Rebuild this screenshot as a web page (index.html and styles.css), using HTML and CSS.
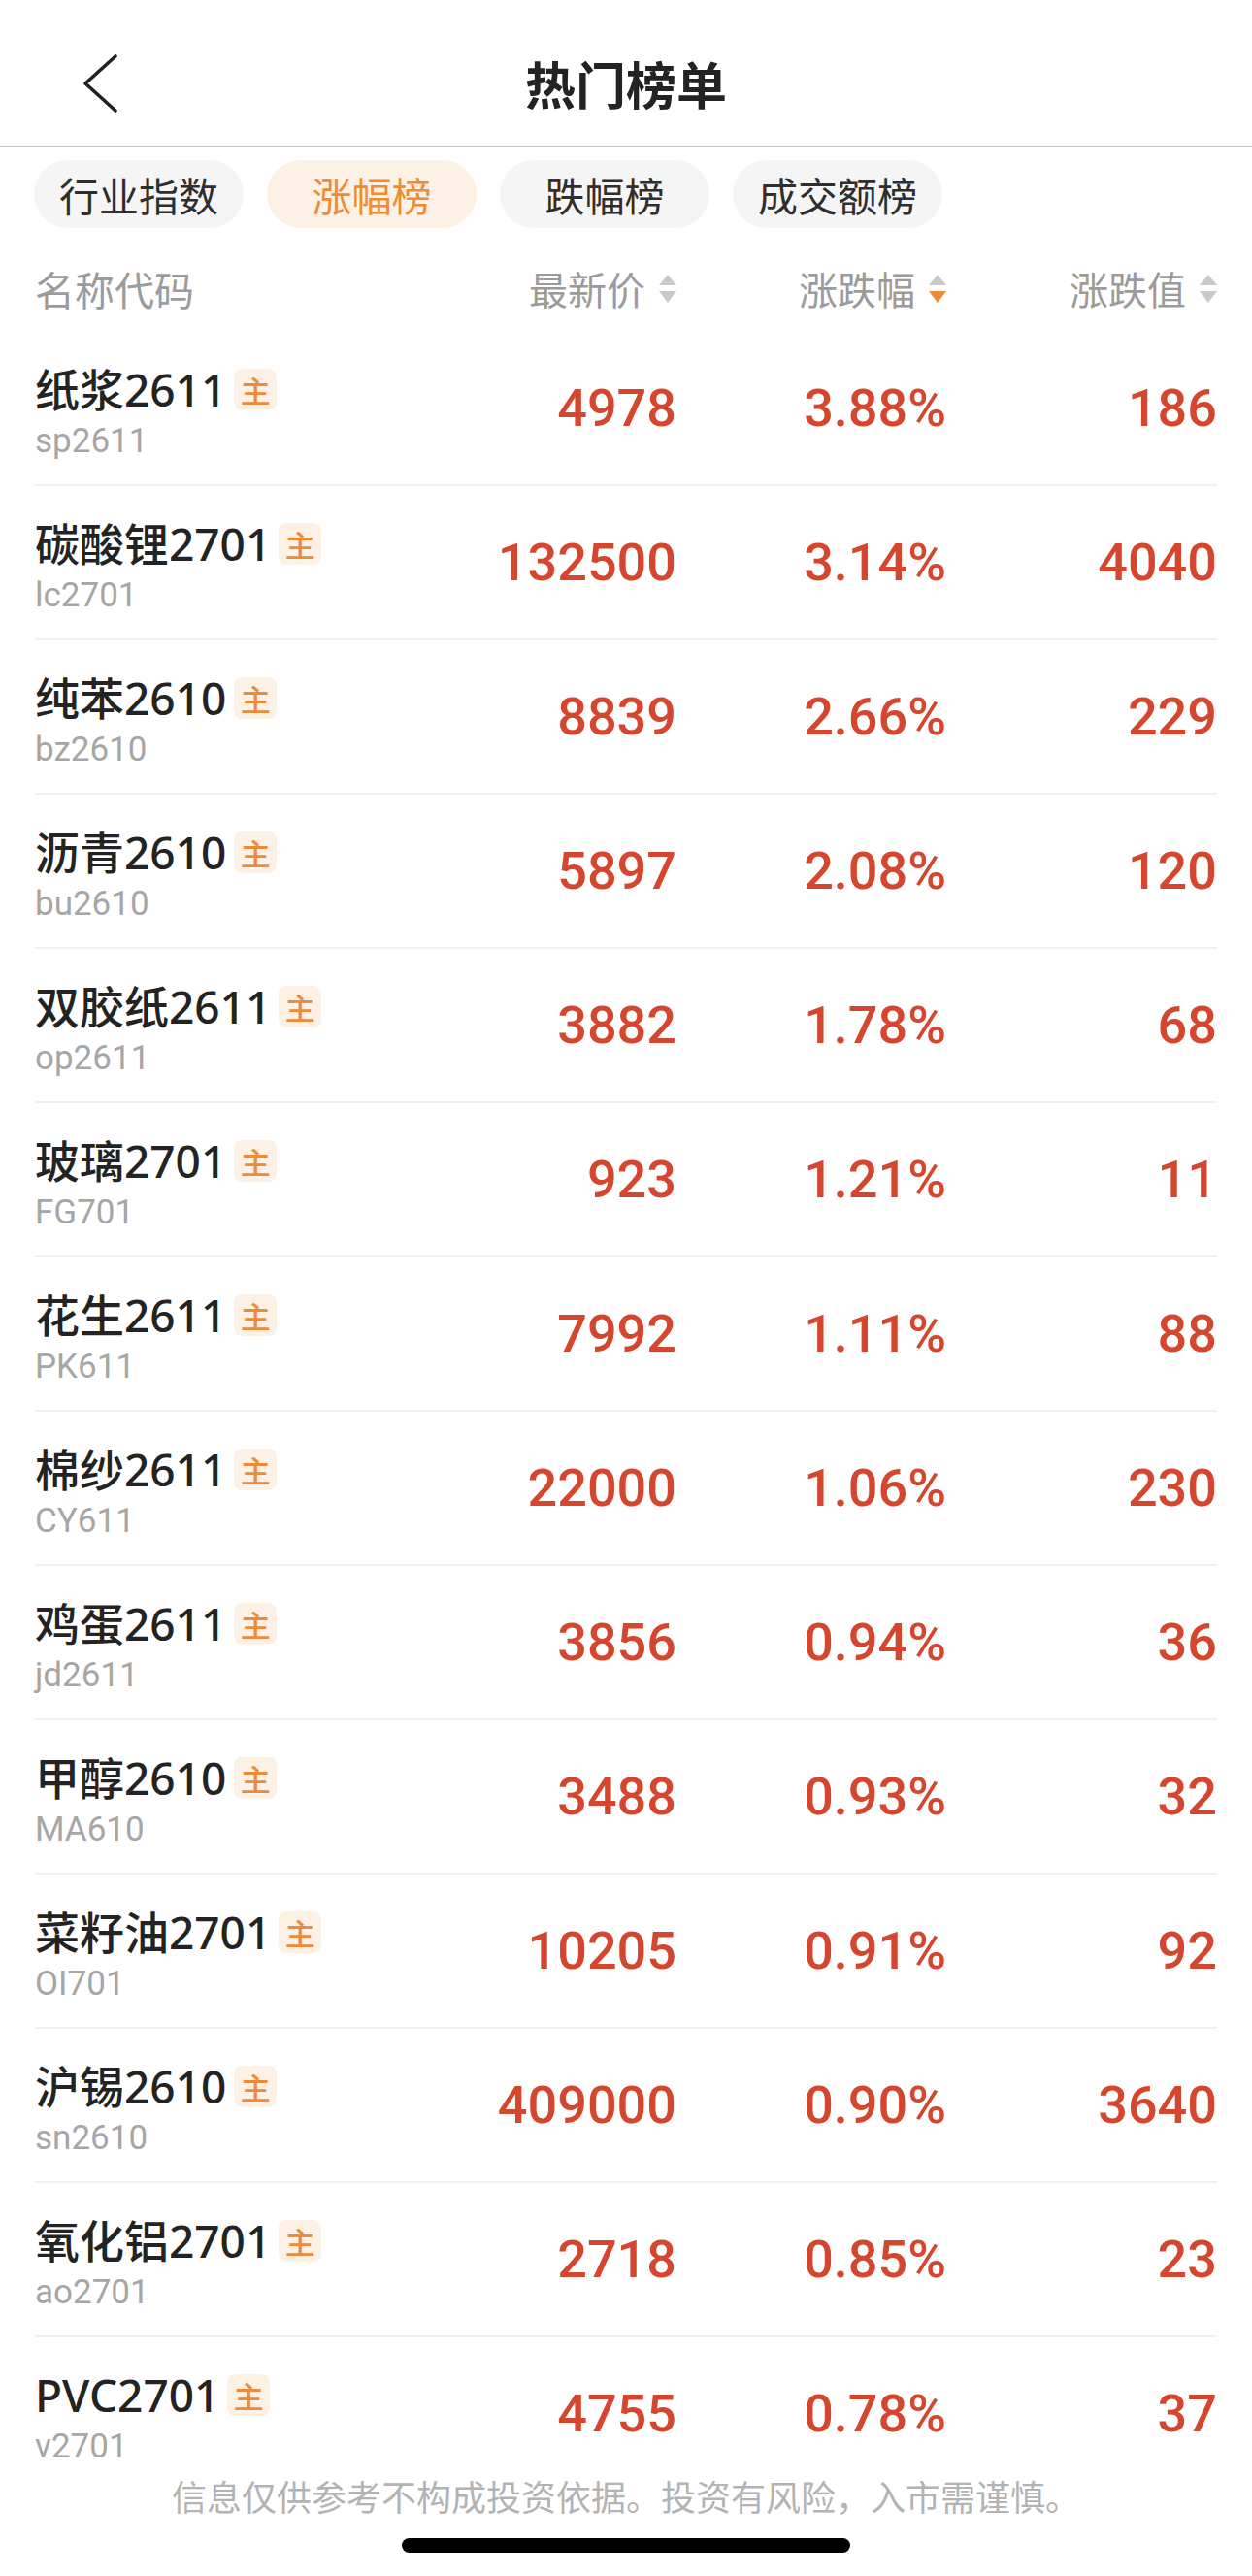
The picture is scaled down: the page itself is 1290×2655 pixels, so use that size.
FILE: index.html
```html
<!DOCTYPE html>
<html lang="zh-CN">
<head>
<meta charset="utf-8">
<title>热门榜单</title>
<link rel="stylesheet" href="styles.css">
</head>
<body>
<div class="page">
  <header class="topbar">
    <div class="back">
      <svg class="back-icon" width="36" height="60" viewBox="0 0 36 60"><polyline points="33,2 2,30 33,58" fill="none" stroke="#222" stroke-width="3.6" stroke-linecap="round" stroke-linejoin="round"/></svg>
    </div>
    <h1 class="title">热门榜单</h1>
    <div class="spacer"></div>
  </header>

  <nav class="tabs">
    <span class="tab">行业指数</span>
    <span class="tab active">涨幅榜</span>
    <span class="tab">跌幅榜</span>
    <span class="tab">成交额榜</span>
  </nav>

  <div class="grid colhead">
    <div class="hcell left">名称代码</div>
    <div class="hcell">最新价<svg class="sort" width="18" height="29" viewBox="0 0 18 29"><polygon points="9,0 18,11 0,11" fill="#c9c9c9"/><polygon points="0,17 18,17 9,29" fill="#c9c9c9"/></svg></div>
    <div class="hcell">涨跌幅<svg class="sort" width="18" height="29" viewBox="0 0 18 29"><polygon points="9,0 18,11 0,11" fill="#c9c9c9"/><polygon points="0,17 18,17 9,29" fill="#ec8a35"/></svg></div>
    <div class="hcell">涨跌值<svg class="sort" width="18" height="29" viewBox="0 0 18 29"><polygon points="9,0 18,11 0,11" fill="#c9c9c9"/><polygon points="0,17 18,17 9,29" fill="#c9c9c9"/></svg></div>
  </div>

  <main class="list">
    <div class="grid row"><div class="name-cell"><div class="name">纸浆2611<span class="badge">主</span></div><div class="code">sp2611</div></div><div class="val">4978</div><div class="val">3.88%</div><div class="val">186</div></div>
    <div class="grid row"><div class="name-cell"><div class="name">碳酸锂2701<span class="badge">主</span></div><div class="code">lc2701</div></div><div class="val">132500</div><div class="val">3.14%</div><div class="val">4040</div></div>
    <div class="grid row"><div class="name-cell"><div class="name">纯苯2610<span class="badge">主</span></div><div class="code">bz2610</div></div><div class="val">8839</div><div class="val">2.66%</div><div class="val">229</div></div>
    <div class="grid row"><div class="name-cell"><div class="name">沥青2610<span class="badge">主</span></div><div class="code">bu2610</div></div><div class="val">5897</div><div class="val">2.08%</div><div class="val">120</div></div>
    <div class="grid row"><div class="name-cell"><div class="name">双胶纸2611<span class="badge">主</span></div><div class="code">op2611</div></div><div class="val">3882</div><div class="val">1.78%</div><div class="val">68</div></div>
    <div class="grid row"><div class="name-cell"><div class="name">玻璃2701<span class="badge">主</span></div><div class="code">FG701</div></div><div class="val">923</div><div class="val">1.21%</div><div class="val">11</div></div>
    <div class="grid row"><div class="name-cell"><div class="name">花生2611<span class="badge">主</span></div><div class="code">PK611</div></div><div class="val">7992</div><div class="val">1.11%</div><div class="val">88</div></div>
    <div class="grid row"><div class="name-cell"><div class="name">棉纱2611<span class="badge">主</span></div><div class="code">CY611</div></div><div class="val">22000</div><div class="val">1.06%</div><div class="val">230</div></div>
    <div class="grid row"><div class="name-cell"><div class="name">鸡蛋2611<span class="badge">主</span></div><div class="code">jd2611</div></div><div class="val">3856</div><div class="val">0.94%</div><div class="val">36</div></div>
    <div class="grid row"><div class="name-cell"><div class="name">甲醇2610<span class="badge">主</span></div><div class="code">MA610</div></div><div class="val">3488</div><div class="val">0.93%</div><div class="val">32</div></div>
    <div class="grid row"><div class="name-cell"><div class="name">菜籽油2701<span class="badge">主</span></div><div class="code">OI701</div></div><div class="val">10205</div><div class="val">0.91%</div><div class="val">92</div></div>
    <div class="grid row"><div class="name-cell"><div class="name">沪锡2610<span class="badge">主</span></div><div class="code">sn2610</div></div><div class="val">409000</div><div class="val">0.90%</div><div class="val">3640</div></div>
    <div class="grid row"><div class="name-cell"><div class="name">氧化铝2701<span class="badge">主</span></div><div class="code">ao2701</div></div><div class="val">2718</div><div class="val">0.85%</div><div class="val">23</div></div>
    <div class="grid row"><div class="name-cell"><div class="name">PVC2701<span class="badge">主</span></div><div class="code">v2701</div></div><div class="val">4755</div><div class="val">0.78%</div><div class="val">37</div></div>
  </main>

  <footer class="footer">
    <p class="disclaimer">信息仅供参考不构成投资依据。投资有风险，入市需谨慎。</p>
    <div class="home-indicator"></div>
  </footer>
</div>
</body>
</html>
```

FILE: styles.css
```css
* { box-sizing: border-box; }
html, body { margin: 0; padding: 0; background: #fff; }
body {
  font-family: "Noto Sans CJK SC", "Noto Sans", sans-serif;
  color: #222;
}
.page {
  width: 1290px;
  height: 2655px;
  display: flex;
  flex-direction: column;
  overflow: hidden;
}
.topbar {
  height: 152px;
  padding-top: 22px;
  border-bottom: 2px solid #c4c4c4;
  display: grid;
  grid-template-columns: 1fr auto 1fr;
  align-items: center;
  flex: none;
}
.back { padding-left: 86px; display: flex; align-items: center; }
.back-icon { display: block; }
.title {
  margin: 0;
  font-size: 52px;
  font-weight: 700;
  line-height: 60px;
  color: #232323;
}
.tabs {
  flex: none;
  display: flex;
  gap: 24px;
  padding: 13px 35px 0;
}
.tab {
  width: 216px;
  height: 70px;
  border-radius: 35px;
  background: #f5f5f5;
  color: #2e2e2e;
  font-size: 41px;
  line-height: 70px;
  text-align: center;
}
.tab.active {
  background: #fdf0e4;
  color: #ea8c39;
}
.grid {
  display: grid;
  grid-template-columns: 1fr 260px 278px 279px;
  margin: 0 36px;
}
.colhead {
  flex: none;
  height: 107px;
  padding-top: 17px;
  align-items: center;
}
.hcell {
  display: flex;
  align-items: center;
  justify-content: flex-end;
  font-size: 40px;
  line-height: 50px;
  color: #9b9b9b;
}
.hcell.left { justify-content: flex-start; font-size: 41px; }
.sort { margin-left: 14px; display: block; }
.list {
  flex: 1;
  overflow: hidden;
}
.row {
  height: 159px;
  border-bottom: 2px solid #f0f0f0;
  align-items: center;
}
.name-cell {
  align-self: start;
  padding-top: 33px;
  min-width: 0;
}
.name {
  display: flex;
  align-items: center;
  font-family: "Noto Sans", "Noto Sans CJK SC", sans-serif;
  font-weight: 500;
  font-size: 46px;
  line-height: 52px;
  color: #232323;
  white-space: nowrap;
}
.badge {
  margin-left: 8px;
  width: 44px;
  height: 43px;
  border-radius: 8px;
  background: #fdf1e6;
  color: #ea8c39;
  font-family: "Noto Sans CJK SC", sans-serif;
  font-size: 31px;
  line-height: 43px;
  text-align: center;
}
.code {
  margin-top: 6px;
  font-family: Roboto, "Noto Sans", sans-serif;
  font-size: 35px;
  line-height: 44px;
  color: #a6a6a6;
}
.val {
  text-align: right;
  font-family: Roboto, "Liberation Sans", sans-serif;
  font-weight: 500;
  font-size: 54px;
  line-height: 60px;
  color: #d5462f;
}
.footer {
  flex: none;
  height: 123px;
  background: #fff;
  padding-top: 15px;
  display: flex;
  flex-direction: column;
  align-items: center;
}
.disclaimer {
  margin: 0;
  font-size: 36px;
  line-height: 50px;
  color: #b3b3b3;
  white-space: nowrap;
}
.home-indicator {
  margin-top: 19px;
  width: 462px;
  height: 15px;
  border-radius: 8px;
  background: #000;
}
```
